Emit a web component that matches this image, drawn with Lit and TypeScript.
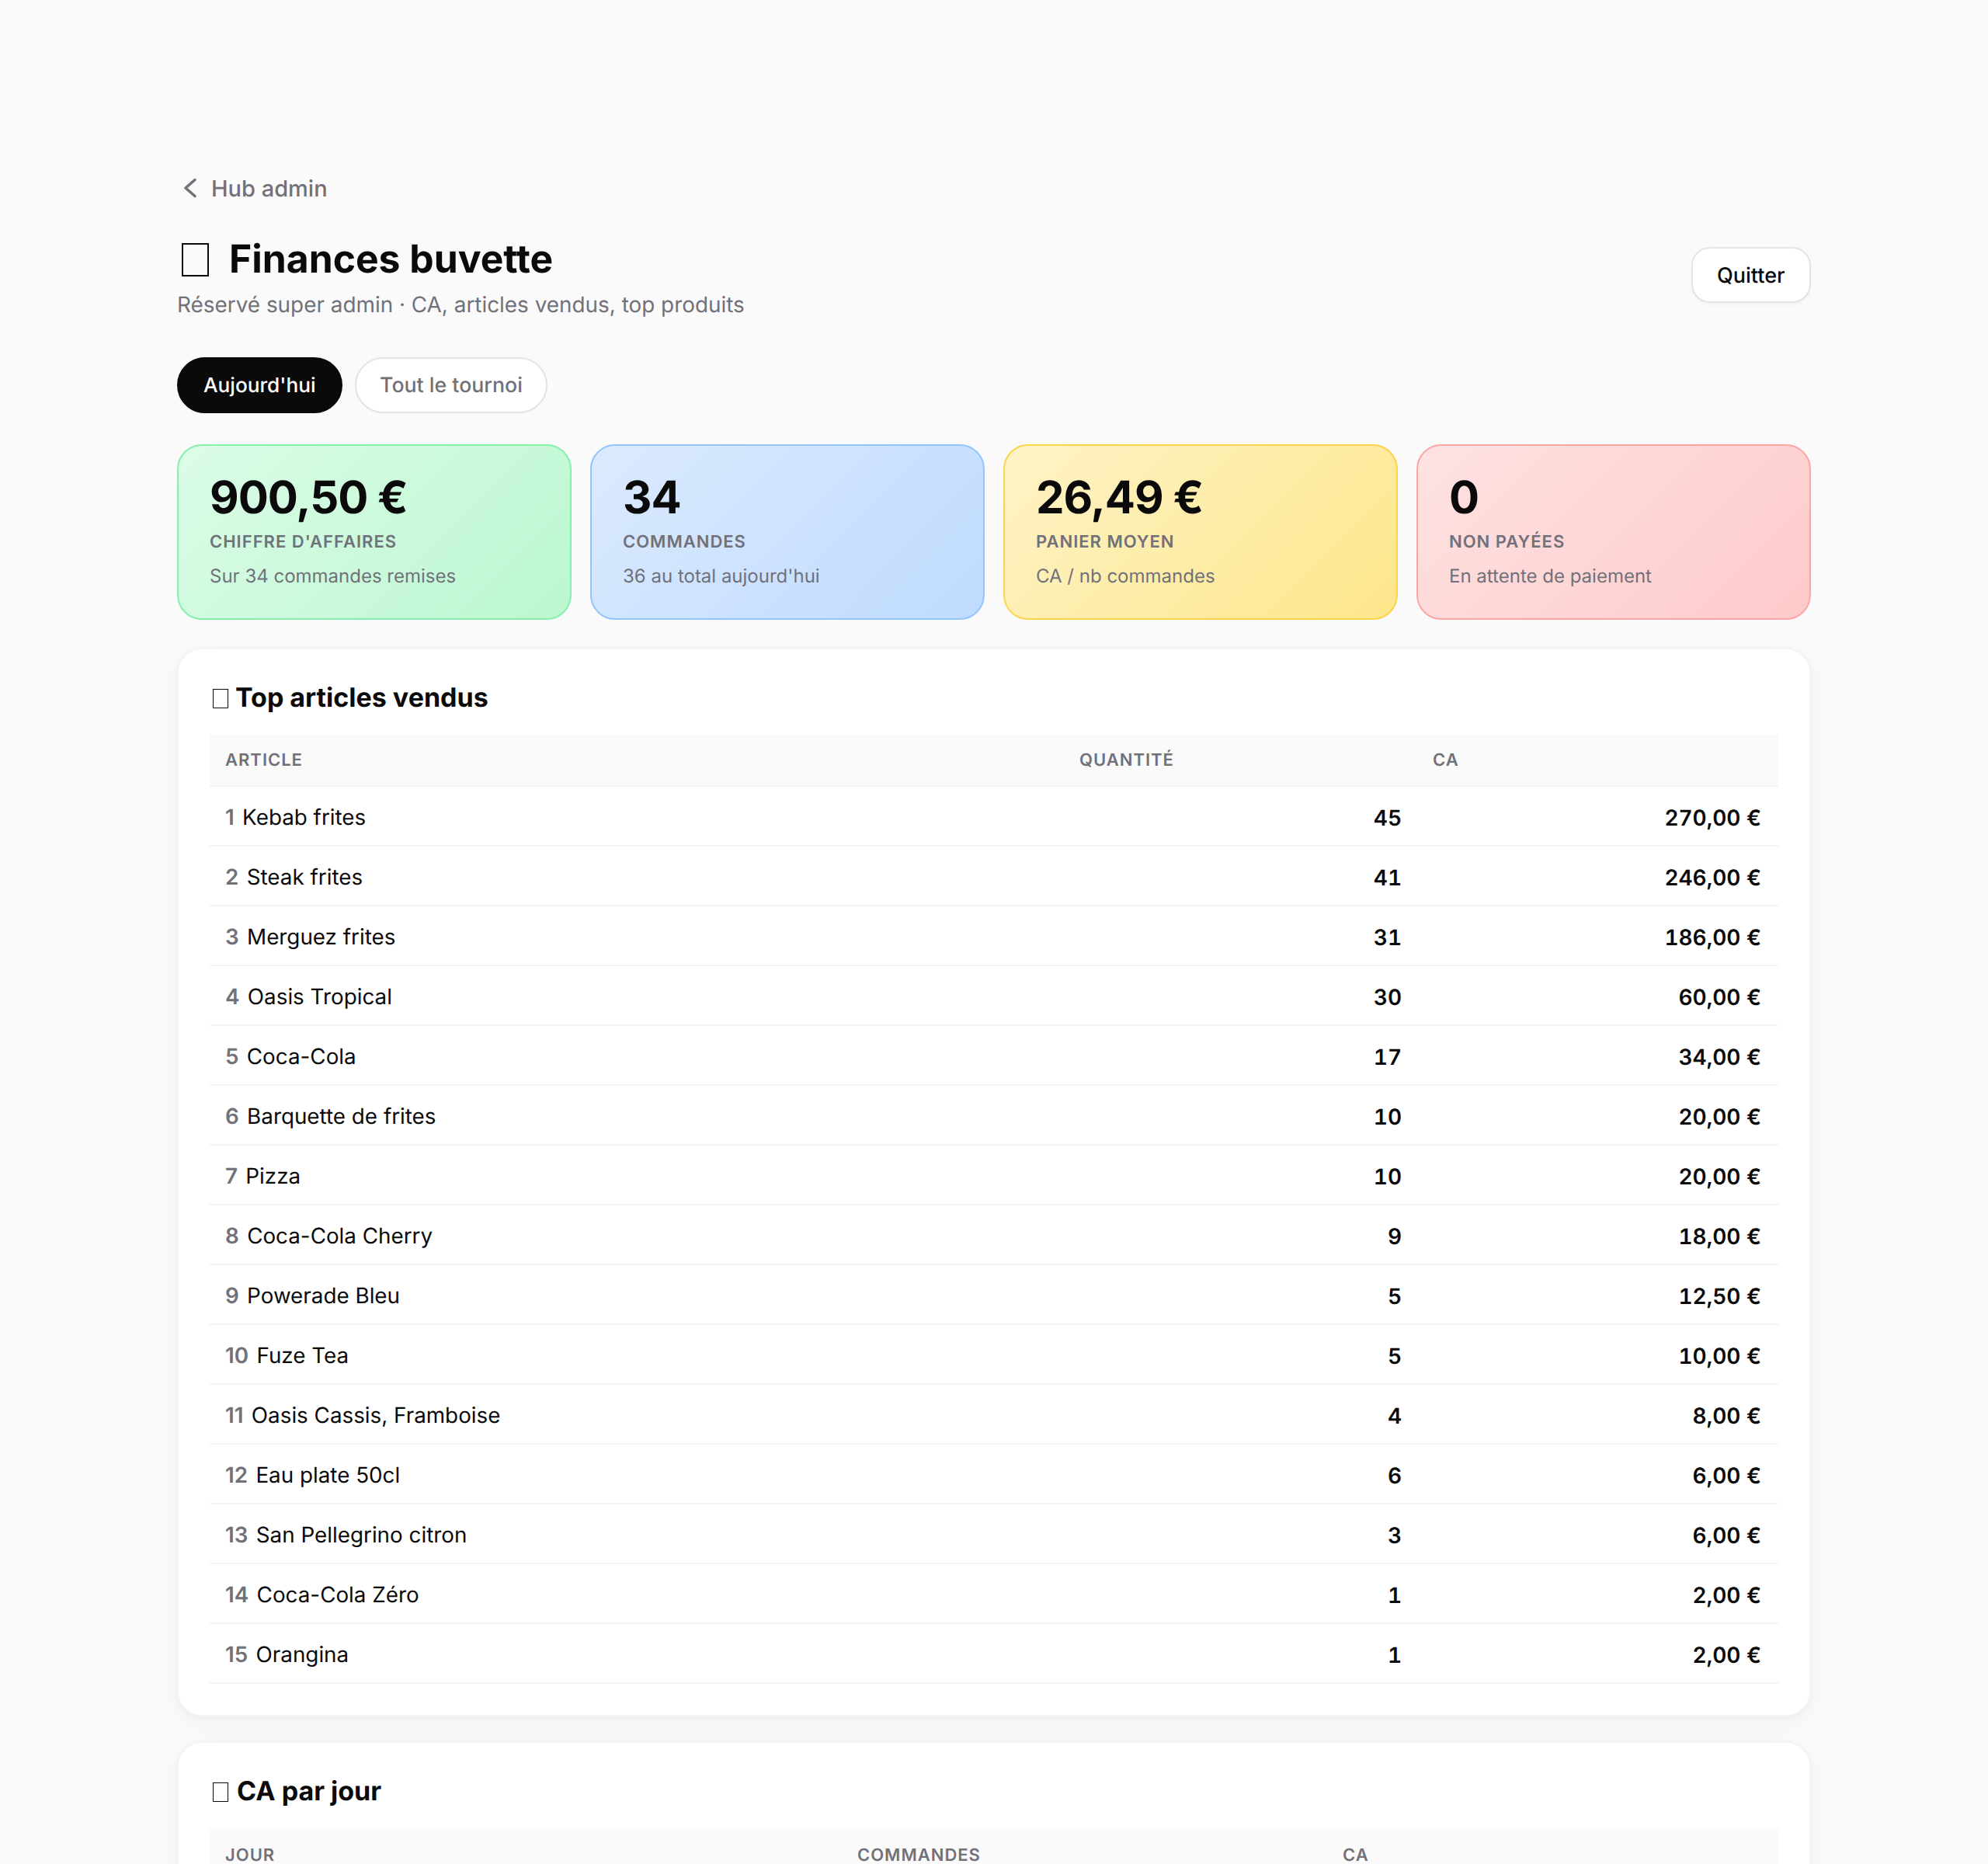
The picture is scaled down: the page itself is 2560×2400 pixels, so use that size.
import { LitElement, html, css } from "lit";
import { customElement } from "lit/decorators.js";

const kpis = [
  { c: "green", v: "900,50 €", l: "Chiffre d'affaires", s: "Sur 34 commandes remises" },
  { c: "blue", v: "34", l: "Commandes", s: "36 au total aujourd'hui" },
  { c: "yellow", v: "26,49 €", l: "Panier moyen", s: "CA / nb commandes" },
  { c: "red", v: "0", l: "Non payées", s: "En attente de paiement" },
];
const rows: [string, number, string][] = [
  ["Kebab frites", 45, "270,00 €"],
  ["Steak frites", 41, "246,00 €"],
  ["Merguez frites", 31, "186,00 €"],
  ["Oasis Tropical", 30, "60,00 €"],
  ["Coca-Cola", 17, "34,00 €"],
  ["Barquette de frites", 10, "20,00 €"],
  ["Pizza", 10, "20,00 €"],
  ["Coca-Cola Cherry", 9, "18,00 €"],
  ["Powerade Bleu", 5, "12,50 €"],
  ["Fuze Tea", 5, "10,00 €"],
  ["Oasis Cassis, Framboise", 4, "8,00 €"],
  ["Eau plate 50cl", 6, "6,00 €"],
  ["San Pellegrino citron", 3, "6,00 €"],
  ["Coca-Cola Zéro", 1, "2,00 €"],
  ["Orangina", 1, "2,00 €"],
];

@customElement("app-root")
export class AppRoot extends LitElement {
  static styles = css`
    :host {
      display: block;
      height: 2400px;
      overflow: hidden;
      background: #fafafa;
      color: #0a0a0a;
      font-family: Inter, "Noto Sans", sans-serif;
      text-rendering: geometricPrecision;
    }
    .page { max-width: 2104px; margin: 0 auto; padding-top: 222px; }
    .back { display: flex; align-items: center; gap: 18px; height: 40px; color: #71717a; font-size: 29px; font-weight: 500; margin-bottom: 36px; }
    .back svg { width: 20px; height: 28px; margin-left: 6px; fill: none; stroke: currentColor; stroke-width: 3.5; stroke-linecap: round; stroke-linejoin: round; }
    .head { display: flex; justify-content: space-between; align-items: center; margin-bottom: 46px; }
    h1 { display: flex; align-items: center; margin: 2px 0 0; font-size: 49.8px; line-height: 68px; font-weight: 700; }
    .tofu1 { box-sizing: border-box; width: 35px; height: 43px; border: 2.5px solid #0a0a0a; margin: 0 26px 0 6px; }
    .subtitle { color: #71717a; font-size: 27.88px; line-height: 44px; margin-top: 2px; }
    .btn { box-sizing: border-box; height: 72px; padding: 0 31.5px; margin-bottom: 4px; border: 2px solid #e4e4e7; background: #fff; border-radius: 24px; font-size: 27px; font-weight: 500; display: flex; align-items: center; box-shadow: 0 2px 4px rgba(0,0,0,.04); }
    .pills { display: flex; gap: 16px; margin-bottom: 40px; }
    .pill { box-sizing: border-box; height: 72px; padding: 0 30.5px; border: 2px solid #e4e4e7; border-radius: 36px; background: #fff; color: #71717a; font-size: 26.7px; font-weight: 500; display: flex; align-items: center; }
    .pill.on { padding: 0 32px; background: #0a0a0a; border-color: #0a0a0a; color: #fff; font-size: 26.2px; }
    .kpis { display: grid; grid-template-columns: repeat(4, 1fr); gap: 24px; margin-bottom: 36px; }
    .kpi { box-sizing: border-box; height: 226px; padding: 31.5px 40px 0; border: 2px solid; border-radius: 32px; }
    .green { background: linear-gradient(135deg, #dcfce7, #bbf7d0); border-color: #86efac; }
    .blue { background: linear-gradient(135deg, #dbeafe, #bfdbfe); border-color: #93c5fd; }
    .yellow { background: linear-gradient(135deg, #fef3c7, #fde68a); border-color: #fcd34d; }
    .red { background: linear-gradient(135deg, #fee2e2, #fecaca); border-color: #fca5a5; }
    .val { font-size: 58px; line-height: 68px; font-weight: 700; letter-spacing: -1px; }
    .lab { font-size: 22px; line-height: 34px; font-weight: 600; letter-spacing: 1px; text-transform: uppercase; color: #71717a; margin-top: 7px; }
    .sub { font-size: 24px; line-height: 40px; color: #71717a; margin-top: 7.5px; }
    .card { background: #fff; border: 2px solid #f4f4f5; border-radius: 32px; padding: 40px; box-shadow: 0 2px 6px rgba(0,0,0,.03), 0 8px 32px rgba(0,0,0,.04); margin-bottom: 32px; }
    h2 { display: flex; align-items: center; margin: 3px 0 27px; font-size: 34px; line-height: 40px; font-weight: 700; }
    .second h2 { margin-bottom: 29px; }
    .tofu2 { box-sizing: border-box; width: 20px; height: 25px; border: 1.5px solid #0a0a0a; margin: 0 9px 0 4px; }
    .second .tofu2 { margin-right: 11px; }
    table { width: 100%; border-collapse: collapse; table-layout: fixed; }
    th { height: 66px; padding: 0 20px; background: #fafafa; border-bottom: 2px solid #f4f4f5; color: #71717a; font-size: 22px; font-weight: 600; letter-spacing: 1px; text-transform: uppercase; text-align: left; box-sizing: border-box; }
    td { height: 77px; padding: 2px 20px 0; border-bottom: 2px solid #f4f4f5; font-size: 27.8px; box-sizing: border-box; }
    .num { padding-top: 5px; font-size: 28px; text-align: right; font-weight: 600; font-variant-numeric: tabular-nums; }
    .num.last { padding-right: 22px; }
    .rank { color: #71717a; font-weight: 600; margin-right: 2.5px; }
    .a1 { width: 1100px; } .a2 { width: 455px; }
    .b1 { width: 814px; } .b2 { width: 625px; }
  `;

  render() {
    return html`<div class="page">
      <div class="back"><svg viewBox="0 0 20 28"><path d="M17 3.5 5 14l12 10.5"></path></svg>Hub admin</div>
      <div class="head">
        <div>
          <h1><span class="tofu1"></span>Finances buvette</h1>
          <div class="subtitle">Réservé super admin · CA, articles vendus, top produits</div>
        </div>
        <div class="btn">Quitter</div>
      </div>
      <div class="pills"><div class="pill on">Aujourd'hui</div><div class="pill">Tout le tournoi</div></div>
      <div class="kpis">
        ${kpis.map((k) => html`<div class="kpi ${k.c}">
          <div class="val">${k.v}</div><div class="lab">${k.l}</div><div class="sub">${k.s}</div>
        </div>`)}
      </div>
      <div class="card">
        <h2><span class="tofu2"></span>Top articles vendus</h2>
        <table>
          <thead><tr><th class="a1">Article</th><th class="a2">Quantité</th><th>CA</th></tr></thead>
          <tbody>
            ${rows.map((r, i) => html`<tr>
              <td><span class="rank">${i + 1}</span> ${r[0]}</td>
              <td class="num">${r[1]}</td>
              <td class="num last">${r[2]}</td>
            </tr>`)}
          </tbody>
        </table>
      </div>
      <div class="card second">
        <h2><span class="tofu2"></span>CA par jour</h2>
        <table>
          <thead><tr><th class="b1">Jour</th><th class="b2">Commandes</th><th>CA</th></tr></thead>
        </table>
      </div>
    </div>`;
  }
}
